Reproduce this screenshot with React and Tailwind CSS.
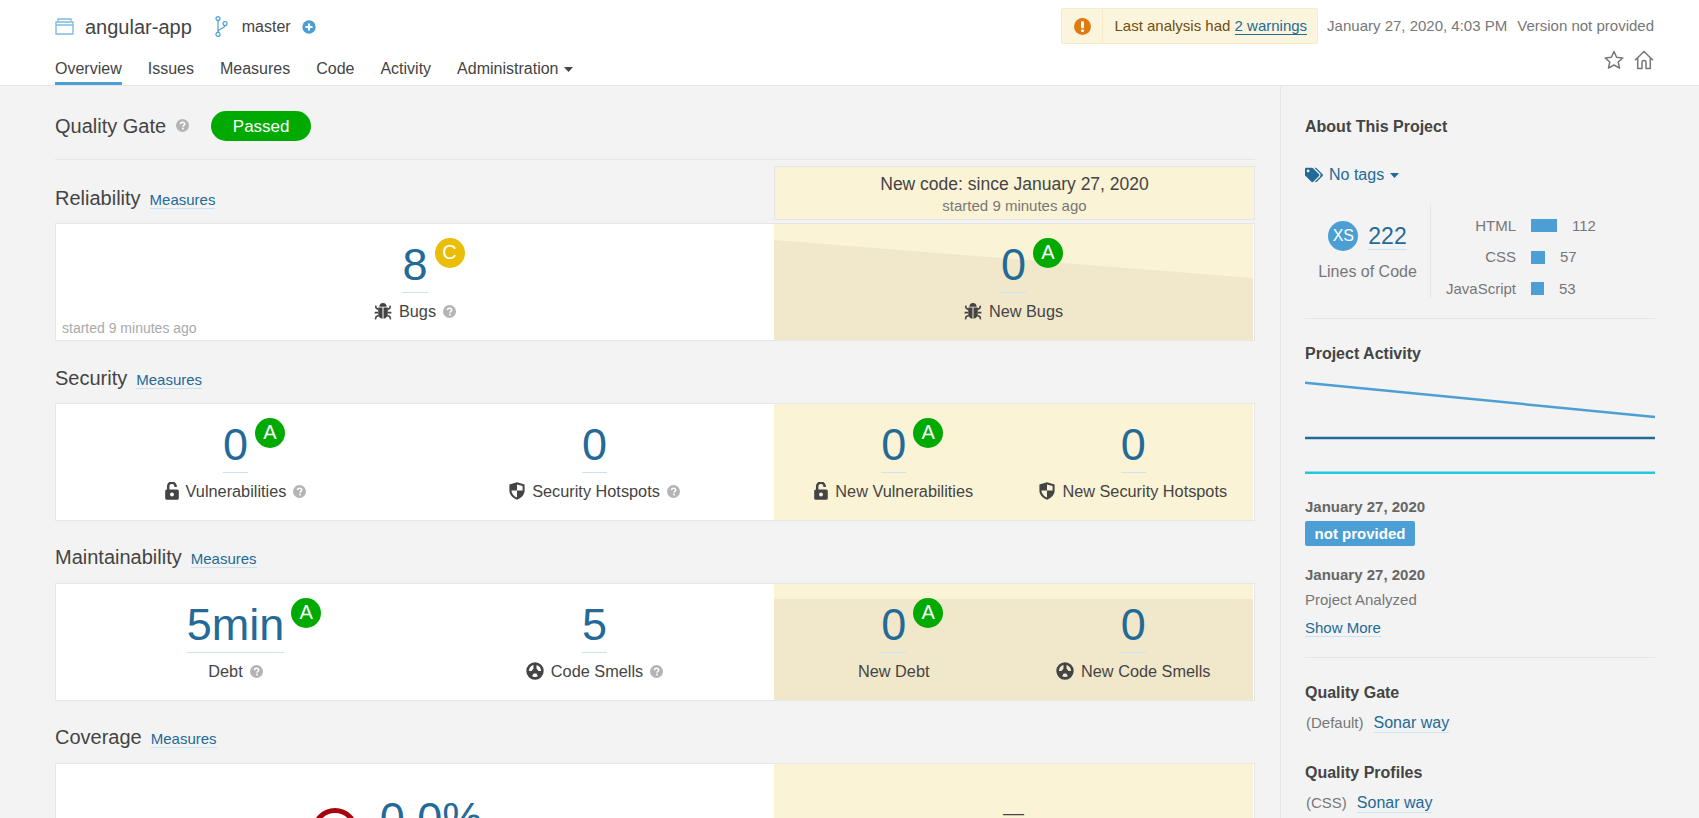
import React from "react";
import { FaTags } from "react-icons/fa";

const Help = () => (
  <svg width="13" height="13" viewBox="0 0 13 13" className="shrink-0">
    <circle cx="6.5" cy="6.5" r="6.5" fill="#b4b4b4" />
    <path d="M4.4 5.1C4.5 3.9 5.4 3.2 6.6 3.2C7.8 3.2 8.7 3.9 8.7 5C8.7 6.3 7 6.4 7 7.7" fill="none" stroke="#fff" strokeWidth="1.5" />
    <rect x="6.1" y="8.7" width="1.7" height="1.7" fill="#fff" />
  </svg>
);

const Bug = () => (
  <svg width="18" height="18" viewBox="0 0 18 18" className="shrink-0">
    <path d="M5.4 4.8A3.6 3.8 0 0 1 12.6 4.8Z" fill="#444" />
    <path fillRule="evenodd" d="M4.2 5.6H8.5V16.8C5.8 16.6 4.2 14.2 4.2 11ZM9.5 5.6H13.8V11C13.8 14.2 12.2 16.6 9.5 16.8Z" fill="#444" />
    <path d="M4.5 7.5L2.2 6.2L1.6 3.6M13.5 7.5L15.8 6.2L16.4 3.6M4 10.6H0.6M14 10.6H17.4M4.8 13.4L2.2 14.6L1.4 17.4M13.2 13.4L15.8 14.6L16.6 17.4" fill="none" stroke="#444" strokeWidth="1.6" />
  </svg>
);

const Lock = () => (
  <svg width="14" height="18" viewBox="0 0 14 18" className="shrink-0">
    <path d="M3.2 8.5V4.6A3.7 3.5 0 0 1 10.6 3.8V5" fill="none" stroke="#444" strokeWidth="2.5" />
    <path fillRule="evenodd" d="M1.8 7.4H12.2A1.6 1.6 0 0 1 13.8 9V16.2A1.6 1.6 0 0 1 12.2 17.8H1.8A1.6 1.6 0 0 1 0.2 16.2V9A1.6 1.6 0 0 1 1.8 7.4ZM7 10.6A2 2 0 1 0 7 14.6A2 2 0 1 0 7 10.6Z" fill="#444" />
  </svg>
);

const Shield = () => (
  <svg width="16" height="18" viewBox="0 0 16 18" className="shrink-0">
    <path fillRule="evenodd" d="M8 0.3L15.6 2.6V8.5C15.6 13 12 16.2 8 17.7C4 16.2 0.4 13 0.4 8.5V2.6ZM8 2.5V8.5H13.6V4.1ZM8 8.5H2.4C2.6 11.8 5 14.3 8 15.6Z" fill="#444" />
  </svg>
);

const Smell = () => (
  <svg width="18" height="18" viewBox="0 0 18 18" className="shrink-0">
    <path fillRule="evenodd" d="M9 0.3A8.7 8.7 0 1 0 9 17.7A8.7 8.7 0 1 0 9 0.3ZM7.5 3.1V6.6L5.6 8.9H2.9C3 6 5 3.7 7.5 3.1ZM10.5 3.1C13 3.7 15 6 15.1 8.9H12.4L10.5 6.6ZM7.6 11.6H10.4L11.9 14.3C10.1 15.2 7.9 15.2 6.1 14.3Z" fill="#444" />
  </svg>
);

const Rating = ({ letter, color = "bg-[#00aa00]" }) => (
  <span className={`absolute left-[calc(100%+7px)] top-[-1px] w-[30px] h-[30px] rounded-full ${color} text-white text-[20px] leading-[28px] text-center`}>
    {letter}
  </span>
);

const Metric = ({ value, rating, ratingColor, icon, label, help }) => (
  <div className="flex-1 flex flex-col items-center pt-[15px]">
    <div className="relative border-b border-[#cae3f2] pb-[2px]">
      <div className="text-[45px] leading-[51px] text-[#236a97]">{value}</div>
      {rating && <Rating letter={rating} color={ratingColor} />}
    </div>
    <div className="flex items-center gap-[7px] mt-[8px] h-[20px] text-[16.3px] leading-[20px] text-[#444]">
      {icon}
      <span>{label}</span>
      {help && <Help />}
    </div>
  </div>
);

const Leak = ({ children, area }) => (
  <div className="relative w-[479px] bg-[#fbf3d5] mr-[1px] flex overflow-hidden">
    {area && (
      <svg className="absolute inset-0 w-full h-full" viewBox="0 0 479 116" preserveAspectRatio="none">
        <polygon points={area} fill="#f1e8cb" />
      </svg>
    )}
    <div className="relative flex flex-1">{children}</div>
  </div>
);

const Card = ({ children, className = "" }) => (
  <div className={`h-[118px] w-[1200px] bg-white border border-[#e6e6e6] flex ${className}`}>{children}</div>
);

const SectionTitle = ({ title }) => (
  <div className="flex items-center h-[38px] gap-[9px]">
    <h3 className="text-[20px] leading-[38px] font-normal text-[#444]">{title}</h3>
    <a className="text-[15px] leading-[17px] mt-[3px] text-[#236a97] border-b border-[#cae3f2]">Measures</a>
  </div>
);

const Section = ({ title, children, up }) => (
  <section className={up ? "mt-[17px]" : "mt-[18px]"}>
    <div className={up ? "mb-[7px]" : "mb-[6px]"}><SectionTitle title={title} /></div>
    {children}
  </section>
);

const Tab = ({ children, active }) => (
  <a className={`text-[16px] leading-[20px] pb-[3px] border-b-[3px] text-[#444] ${active ? "border-[#4b9fd5]" : "border-transparent"}`}>
    {children}
  </a>
);

const Caret = ({ color = "#444" }) => (
  <svg width="9" height="5" viewBox="0 0 9 5" className="shrink-0"><path d="M0 0H9L4.5 5Z" fill={color} /></svg>
);

const LangRow = ({ name, width, value }) => (
  <div className="flex items-center h-[31.5px] text-[15px] text-[#777]">
    <span className="w-[85px] text-right">{name}</span>
    <span className="ml-[15px] h-[13px] bg-[#4b9fd5]" style={{ width }} />
    <span className="ml-[15px]">{value}</span>
  </div>
);

const SideTitle = ({ children, className = "" }) => (
  <h4 className={`text-[16px] leading-[20px] font-bold text-[#444] ${className}`}>{children}</h4>
);

export default function App() {
  return (
    <div className="h-screen overflow-hidden bg-[#f3f3f3] font-['Liberation_Sans',Arial,sans-serif] text-[#444]">
      <header className="h-[86px] bg-white border-b border-[#e6e6e6] pl-[55px] pr-[45px] pt-[8px]">
        <div className="flex items-center justify-between h-[36px]">
          <div className="flex items-center pt-[1px]">
            <svg width="19" height="17" viewBox="0 0 19 17" className="mt-[-1px]">
              <path d="M3 3V1H16V3M1 4H18V16H1ZM1 7H18" fill="none" stroke="#7fbbe3" strokeWidth="1.4" />
            </svg>
            <span className="ml-[11px] text-[20px] leading-[28px] text-[#444]">angular-app</span>
            <svg width="13" height="21" viewBox="0 0 13 21" className="ml-[23px]">
              <circle cx="3" cy="2.6" r="2" fill="none" stroke="#4b9fd5" strokeWidth="1.2" />
              <circle cx="3" cy="18.4" r="2" fill="none" stroke="#4b9fd5" strokeWidth="1.2" />
              <circle cx="10" cy="7.6" r="2" fill="none" stroke="#4b9fd5" strokeWidth="1.2" />
              <path d="M3 4.6V16.4M10 9.6C10 12.5 3.5 12 3 16" fill="none" stroke="#4b9fd5" strokeWidth="1.2" />
            </svg>
            <span className="ml-[14px] text-[16px] leading-[20px] text-[#444]">master</span>
            <svg width="14" height="14" viewBox="0 0 14 14" className="ml-[11px]">
              <circle cx="7" cy="7" r="6.7" fill="#4b9fd5" />
              <path d="M7 3.5V10.5M3.5 7H10.5" stroke="#fff" strokeWidth="2" />
            </svg>
          </div>
          <div className="flex items-center">
            <div className="flex items-center h-[36px] bg-[#fcf5dd] border border-[#f9ebc8] rounded-[2px] text-[15px] text-[#6f4e12]">
              <div className="w-[41px] h-full flex items-center justify-center border-r border-[#f9ebc8]">
                <svg width="17" height="17" viewBox="0 0 17 17">
                  <circle cx="8.5" cy="8.5" r="8.5" fill="#e07b14" />
                  <rect x="7" y="3.2" width="3" height="7" rx="1" fill="#fff" />
                  <rect x="7" y="11.4" width="3" height="2.6" rx="0.8" fill="#fff" />
                </svg>
              </div>
              <span className="ml-[11px] mr-[10px] pt-[1px]">
                Last analysis had <a className="text-[#236a97] border-b border-[#236a97] inline-block leading-[17px]">2 warnings</a>
              </span>
            </div>
            <span className="ml-[9px] pt-[1px] text-[15px] text-[#777]">January 27, 2020, 4:03 PM</span>
            <span className="ml-[10px] pt-[1px] text-[15px] text-[#777]">Version not provided</span>
          </div>
        </div>
        <div className="flex justify-between h-[41px]">
          <nav className="flex items-end gap-[26px]">
            <Tab active>Overview</Tab>
            <Tab>Issues</Tab>
            <Tab>Measures</Tab>
            <Tab>Code</Tab>
            <Tab>Activity</Tab>
            <div className="flex items-center gap-[6px] pb-[6px]">
              <span className="text-[16px] leading-[20px] text-[#444]">Administration</span>
              <Caret />
            </div>
          </nav>
          <div className="flex gap-[10px] mt-[6px] h-[20px]">
            <svg width="20" height="20" viewBox="0 0 20 20">
              <path d="M10 1.5L12.6 7.2L18.8 7.9L14.2 12L15.5 18.2L10 15L4.5 18.2L5.8 12L1.2 7.9L7.4 7.2Z" fill="none" stroke="#777" strokeWidth="1.5" strokeLinejoin="round" />
            </svg>
            <svg width="20" height="20" viewBox="0 0 20 20">
              <path d="M1 10.2L10 1.5L19 10.2M3.7 8V18.5H8V12.5A2 2 0 0 1 12 12.5V18.5H16.3V8" fill="none" stroke="#777" strokeWidth="1.5" strokeLinejoin="round" />
            </svg>
          </div>
        </div>
      </header>

      <div className="flex">
        <main className="w-[1280px] pl-[55px] pr-[25px]">
          <div className="flex items-center h-[74px] pt-[6px] border-b border-[#e6e6e6]">
            <h2 className="text-[20px] font-normal text-[#444]">Quality Gate</h2>
            <span className="ml-[10px]"><Help /></span>
            <span className="ml-[22px] w-[100px] h-[30px] rounded-[15px] bg-[#00aa00] text-white text-[17px] leading-[31px] text-center">Passed</span>
          </div>

          <div className="flex justify-between h-[63px] pt-[6px]">
            <div className="self-end mb-[6px]"><SectionTitle title="Reliability" /></div>
            <div className="w-[481px] h-[54px] bg-[#fbf3d5] border border-[#e6e6e6] text-center">
              <div className="text-[17.5px] leading-[21px] mt-[7px] text-[#444]">New code: since January 27, 2020</div>
              <div className="text-[15px] leading-[17px] mt-[2px] text-[#777]">started 9 minutes ago</div>
            </div>
          </div>

          <Card className="relative">
            <div className="flex-1 flex relative">
              <Metric value="8" rating="C" ratingColor="bg-[#eabe06]" icon={<Bug />} label="Bugs" help />
              <span className="absolute left-[6px] bottom-[3px] text-[14px] leading-[18px] text-[#aaa]">started 9 minutes ago</span>
            </div>
            <Leak area="0,16 479,54 479,116 0,116">
              <Metric value="0" rating="A" icon={<Bug />} label="New Bugs" />
            </Leak>
          </Card>

          <Section title="Security">
            <Card>
              <div className="flex-1 flex">
                <Metric value="0" rating="A" icon={<Lock />} label="Vulnerabilities" help />
                <Metric value="0" icon={<Shield />} label="Security Hotspots" help />
              </div>
              <Leak>
                <Metric value="0" rating="A" icon={<Lock />} label="New Vulnerabilities" />
                <Metric value="0" icon={<Shield />} label="New Security Hotspots" />
              </Leak>
            </Card>
          </Section>

          <Section title="Maintainability" up>
            <Card>
              <div className="flex-1 flex">
                <Metric value="5min" rating="A" label="Debt" help />
                <Metric value="5" icon={<Smell />} label="Code Smells" help />
              </div>
              <Leak area="0,15 479,15 479,116 0,116">
                <Metric value="0" rating="A" label="New Debt" />
                <Metric value="0" icon={<Smell />} label="New Code Smells" />
              </Leak>
            </Card>
          </Section>

          <Section title="Coverage" up>
            <Card>
              <div className="flex-1 flex justify-center pr-[36px]">
                <svg width="46" height="46" viewBox="0 0 46 46" className="mt-[44px] shrink-0">
                  <circle cx="23" cy="23" r="20.5" fill="none" stroke="#a4030f" strokeWidth="5" />
                </svg>
                <div className="ml-[22px] mt-[29px] h-[60px]">
                  <div className="text-[45px] leading-[51px] text-[#236a97]">0.0%</div>
                </div>
              </div>
              <Leak>
                <div className="flex-1 text-center pt-[37px] text-[21px] leading-[24px] text-[#444]">—</div>
              </Leak>
            </Card>
          </Section>
        </main>

        <aside className="w-[419px] h-[732px] border-l border-[#e6e6e6] pl-[24px] pr-[44px] pt-[31px] text-[15px] text-[#777]">
          <SideTitle>About This Project</SideTitle>
          <div className="flex items-center mt-[28px] h-[20px] text-[#236a97]">
            <FaTags className="w-[18px] h-[16px] text-[#236a97]" />
            <span className="ml-[6px] text-[16px] leading-[20px]">No tags</span>
            <span className="ml-[6px]"><Caret color="#236a97" /></span>
          </div>
          <div className="flex h-[94px] mt-[19px]">
            <div className="w-[126px] border-r border-[#e6e6e6] flex flex-col items-center pt-[17px]">
              <div className="flex items-center h-[30px] gap-[10px]">
                <span className="w-[30px] h-[30px] rounded-full bg-[#4b9fd5] text-white text-[16px] leading-[30px] text-center">XS</span>
                <a className="text-[23px] leading-[26px] text-[#236a97] border-b border-[#cae3f2]">222</a>
              </div>
              <div className="mt-[11px] text-[16px] leading-[20px] text-[#777]">Lines of Code</div>
            </div>
            <div className="pt-[6px]">
              <LangRow name="HTML" width={26} value="112" />
              <LangRow name="CSS" width={14} value="57" />
              <LangRow name="JavaScript" width={13} value="53" />
            </div>
          </div>
          <div className="mt-[20px] border-t border-[#e6e6e6]" />
          <SideTitle className="mt-[25px]">Project Activity</SideTitle>
          <svg width="350" height="96" viewBox="0 0 350 96" className="mt-[16px] block">
            <path d="M0 2.7L350 37" stroke="#4b9fd5" strokeWidth="2.5" fill="none" />
            <path d="M0 58H350" stroke="#236a97" strokeWidth="2.5" fill="none" />
            <path d="M0 92.7H350" stroke="#24c6e0" strokeWidth="2.5" fill="none" />
          </svg>
          <div className="mt-[21px] font-bold leading-[20px] text-[#666]">January 27, 2020</div>
          <div className="mt-[4px] w-[110px] h-[25px] rounded-[2px] bg-[#4b9fd5] text-white font-bold leading-[25px] text-center">not provided</div>
          <div className="mt-[19px] font-bold leading-[20px] text-[#666]">January 27, 2020</div>
          <div className="mt-[5px] leading-[20px]">Project Analyzed</div>
          <div className="mt-[7px] h-[20px]"><a className="inline-block leading-[17px] text-[#236a97] border-b border-[#cae3f2]">Show More</a></div>
          <div className="mt-[20px] border-t border-[#e6e6e6]" />
          <SideTitle className="mt-[25px]">Quality Gate</SideTitle>
          <div className="mt-[10px] flex items-center h-[20px]">
            <span className="ml-[1px]">(Default)</span>
            <a className="ml-[10px] text-[16px] leading-[18px] text-[#236a97] border-b border-[#cae3f2]">Sonar way</a>
          </div>
          <SideTitle className="mt-[30px]">Quality Profiles</SideTitle>
          <div className="mt-[10px] flex items-center h-[20px]">
            <span className="ml-[1px]">(CSS)</span>
            <a className="ml-[10px] text-[16px] leading-[18px] text-[#236a97] border-b border-[#cae3f2]">Sonar way</a>
          </div>
        </aside>
      </div>
    </div>
  );
}
